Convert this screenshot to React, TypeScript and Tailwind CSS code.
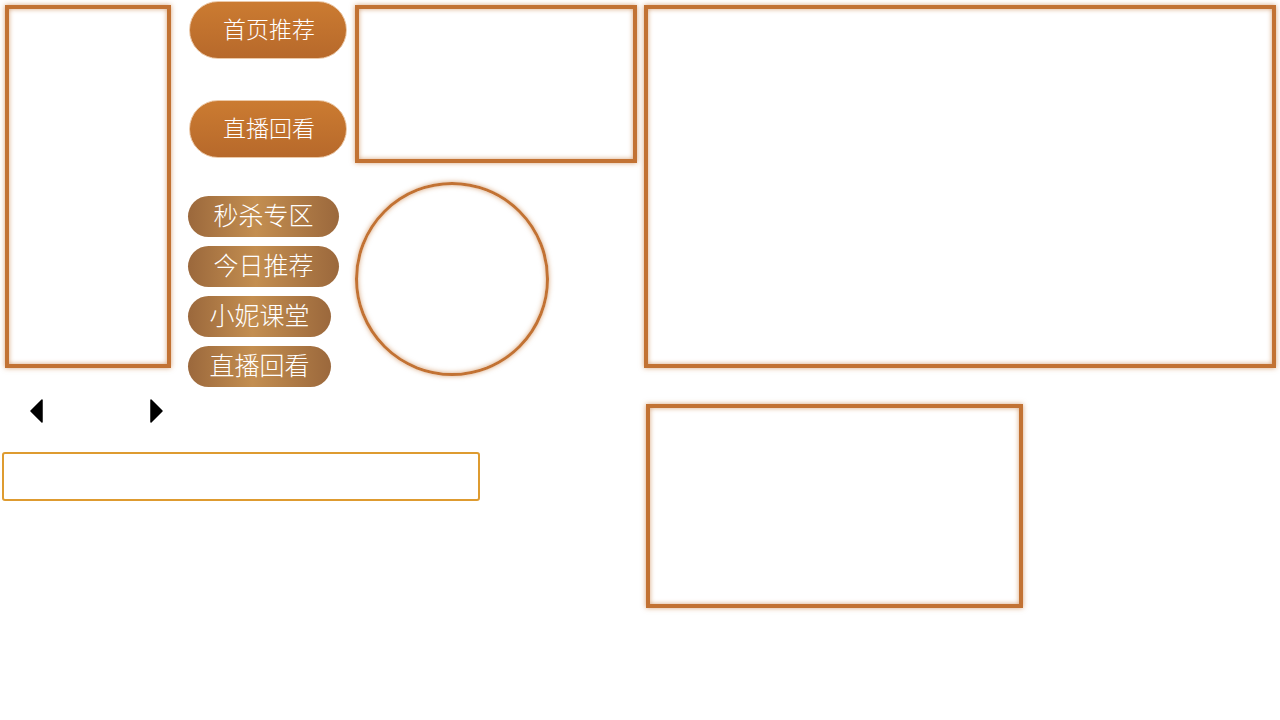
import React from "react";

const frame =
  "border-4 border-[#c27233] shadow-[0_0_5px_rgba(195,116,52,0.65),inset_0_0_5px_rgba(195,116,52,0.65)] bg-white";

const cjk = { fontFamily: '"Noto Sans CJK SC", "Noto Sans", sans-serif' };

function BigButton({ label, className = "" }: { label: string; className?: string }) {
  return (
    <button
      style={cjk}
      className={`flex h-[58px] w-[158px] items-center justify-center rounded-full border border-[#ecc9a8] bg-gradient-to-b from-[#cb7b31] to-[#b7692b] pb-[4px] pl-[2px] text-[23px] font-light leading-none text-white ${className}`}
    >
      {label}
    </button>
  );
}

function SmallButton({ label, width }: { label: string; width: string }) {
  return (
    <button
      style={cjk}
      className={`flex h-[41px] ${width} items-center justify-center rounded-full bg-[linear-gradient(to_right,#9b683c,#c38e50_45%,#9b683c)] pb-[4px] text-[25px] font-light leading-none text-white`}
    >
      {label}
    </button>
  );
}

function Caret({ dir }: { dir: "left" | "right" }) {
  return (
    <svg width="13" height="24" viewBox="0 0 13 24">
      <polygon
        points={dir === "left" ? "12,1 12,23 1,12" : "1,1 1,23 12,12"}
        fill="#000"
        stroke="#000"
        strokeWidth="1.5"
        strokeLinejoin="round"
      />
    </svg>
  );
}

export default function App() {
  return (
    <div className="flex h-[720px] w-[1280px] bg-white">
      <div className="flex w-[643px] flex-col">
        <div className="flex items-start">
          <div className={`ml-[5px] mt-[5px] h-[363px] w-[166px] ${frame}`} />

          <div className="ml-[18px] mt-[1px] flex w-[158px] flex-col">
            <BigButton label="首页推荐" />
            <BigButton label="直播回看" className="mt-[41px]" />
            <div className="-ml-[1px] mt-[38px] flex flex-col gap-[9px]">
              <SmallButton label="秒杀专区" width="w-[151px]" />
              <SmallButton label="今日推荐" width="w-[151px]" />
              <SmallButton label="小妮课堂" width="w-[143px]" />
              <SmallButton label="直播回看" width="w-[143px]" />
            </div>
          </div>

          <div className="ml-[8px] flex flex-col">
            <div className={`mt-[5px] h-[158px] w-[282px] ${frame}`} />
            <div className="mt-[19px] h-[194px] w-[194px] rounded-full border-[3px] border-[#c27233] shadow-[0_0_5px_rgba(195,116,52,0.65),inset_0_0_5px_rgba(195,116,52,0.65)]" />
          </div>
        </div>

        <div className="ml-[30px] mt-[12px] flex gap-[107px]">
          <Caret dir="left" />
          <Caret dir="right" />
        </div>

        <input
          type="text"
          className="ml-[2px] mt-[29px] h-[49px] w-[478px] rounded-[3px] border-2 border-[#de9b30] bg-white outline-none"
        />
      </div>

      <div className="flex flex-col">
        <div className={`ml-[1px] mt-[5px] h-[363px] w-[632px] ${frame}`} />
        <div className={`ml-[3px] mt-[36px] h-[204px] w-[377px] ${frame}`} />
      </div>
    </div>
  );
}
